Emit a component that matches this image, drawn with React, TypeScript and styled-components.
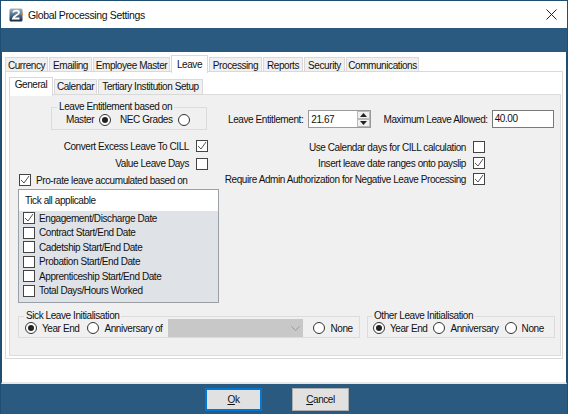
import React from "react";
import styled, { createGlobalStyle } from "styled-components";

const Global = createGlobalStyle`
  html, body { margin: 0; padding: 0; background: #fff; }
  body { font-family: "Liberation Sans", Arial, sans-serif; font-size: 10px; letter-spacing: -0.42px; color: #111; }
  * { box-sizing: border-box; }
`;

const Window = styled.div`
  width: 568px; height: 414px; display: flex; flex-direction: column;
  border: solid #1f4e70; border-width: 1px 1px 0 1px; background: #fff;
`;
const TitleBar = styled.div`
  height: 27px; display: flex; align-items: center; padding: 0 10px 0 8px; gap: 5px; background: #fff;
`;
const Title = styled.span`
  font: 10.5px "Liberation Sans", sans-serif; letter-spacing: -0.35px; color: #111; flex: 1;
`;
const Band = styled.div`height: 24px; background: #2a5a80;`;
const Body = styled.div`
  flex: 1; padding: 3px 3px 0 3px; display: flex; flex-direction: column; background: #fff;
  border-left: 1px solid #1f4e70; border-right: 1px solid #1f4e70; border-bottom: 2px solid #e8e8e8;
`;
const TabRow = styled.div`display: flex; align-items: flex-end; gap: 1px; position: relative; z-index: 1;`;
const Tab = styled.div<{ $on?: boolean; $w: number; $inner?: boolean }>`
  width: ${p => p.$w}px;
  height: ${p => p.$on ? (p.$inner ? 19 : 18) : (p.$inner ? 16 : 15)}px;
  line-height: ${p => p.$on ? (p.$inner ? 13 : 17) : (p.$inner ? 14 : 15)}px;
  text-align: center;
  background: ${p => p.$on ? "#fff" : "#f0f0f0"};
  border: 1px solid #d9d9d9; border-bottom: ${p => p.$on ? "none" : "1px solid #d9d9d9"};
  margin-bottom: ${p => p.$on ? -1 : 0}px; white-space: nowrap;
`;
const OuterPanel = styled.div`
  margin-top: -1px; height: 288px; border: 1px solid #d9d9d9; background: #fff; padding: 5px 1px 2px 3px;
`;
const InnerPanel = styled.div`
  height: 262px; background: #f0f0f0; border: 1px solid #dcdcdc; margin-top: -1px; padding: 5px 6px 0 8px;
  display: flex; flex-direction: column;
`;
const Columns = styled.div`display: flex; gap: 9px;`;
const LeftCol = styled.div`width: 201px; flex: none; display: flex; flex-direction: column;`;
const RightCol = styled.div`flex: 1; min-width: 0; display: flex; flex-direction: column;`;
const Group = styled.fieldset<{ $w: number; $h: number; $px?: number }>`
  width: ${p => p.$w}px; height: ${p => p.$h}px; margin: 0; padding: 0 ${p => p.$px ?? 6}px; border: 1px solid #dcdcdc; min-width: 0;
  position: relative; display: flex; align-items: center; flex: none;
`;
const Legend = styled.legend`
  padding: 0 2px; margin-left: -1px; line-height: 10px; height: 10px; white-space: nowrap;
`;
const EntGroupWrap = styled.div`margin: 2px 0 0 33px; height: 28px;`;
const Options = styled.div<{ $gap: number; $pad?: number }>`
  display: flex; align-items: center; gap: ${p => p.$gap}px; padding-left: ${p => p.$pad ?? 0}px; margin-top: -2px;
`;
const Opt = styled.label`display: flex; align-items: center; gap: 5px; white-space: nowrap;`;
const RadioBox = styled.span<{ $on?: boolean }>`
  width: 12px; height: 12px; border-radius: 50%; border: 1px solid #333; background: #fff;
  display: inline-flex; align-items: center; justify-content: center; flex: none;
  &::after { content: ""; width: 6px; height: 6px; border-radius: 50%; background: ${p => p.$on ? "#222" : "transparent"}; }
`;
const Box = styled.span`
  width: 12px; height: 12px; border: 1px solid #444; background: #fff; flex: none; display: inline-flex;
  align-items: center; justify-content: center;
`;
const CheckRow = styled.div<{ $h: number }>`
  display: flex; justify-content: flex-end; align-items: center; gap: 7px; height: ${p => p.$h}px; white-space: nowrap;
`;
const LeftChecks = styled.div`margin-top: 7px; padding-right: 11px;`;
const ProRate = styled.div`display: flex; align-items: center; gap: 5px; height: 16px; padding-left: 1px;`;
const ListBox = styled.div`
  width: 201px; height: 114px; margin-top: 1px; border: 1px solid #9aa0a6; background: #dfe3e8; display: flex; flex-direction: column;
`;
const ListHead = styled.div`height: 21px; line-height: 21px; background: #fff; padding-left: 6px;`;
const ListItems = styled.div`padding: 0 0 0 4px; display: flex; flex-direction: column;`;
const ListItem = styled.div`display: flex; align-items: center; gap: 4px; height: 14.5px; white-space: nowrap;`;
const EntRow = styled.div`display: flex; align-items: center; margin-top: 9px; height: 20px;`;
const Label = styled.span<{ $ml?: number }>`margin-left: ${p => p.$ml ?? 0}px; white-space: nowrap;`;
const Spinner = styled.div`
  width: 64px; height: 18px; margin-left: 5px; border: 1px solid #9a9a9a; background: #fff; display: flex; align-items: center;
  padding-left: 2px; position: relative;
`;
const SpinBtns = styled.div`
  position: absolute; right: 0; top: 0; bottom: 0; width: 13px; display: flex; flex-direction: column; background: #f0f0f0;
`;
const SpinBtn = styled.span`
  flex: 1; display: flex; align-items: center; justify-content: center; border: 1px solid #bbb;
`;
const TextInput = styled.div`
  width: 64px; height: 18px; margin-left: 4px; border: 1px solid #7a7a7a; background: #fff; padding-left: 2px; line-height: 16px;
`;
const RightChecks = styled.div`margin-top: 10px; padding-right: 69px; display: flex; flex-direction: column;`;
const BottomRow = styled.div`display: flex; gap: 7px; margin-top: 8px;`;
const Combo = styled.div`
  width: 135px; height: 18px; background: #c8c8c8; display: flex; align-items: center; justify-content: flex-end; padding-right: 3px; margin: 0 2px 0 -2px;
`;
const Footer = styled.div`
  height: 30px; background: #2a5a80; display: flex; align-items: center; padding-left: 204px; gap: 30px;
`;
const Btn = styled.div<{ $primary?: boolean }>`
  width: 57px; height: 23px; background: #e1e1e1; border: ${p => p.$primary ? "2px solid #0078d7" : "1px solid #adadad"};
  display: flex; align-items: center; justify-content: center; color: #111;
  u { text-decoration: underline; }
`;

const Check = () => (
  <svg width="10" height="10" viewBox="0 0 10 10" fill="none">
    <path d="M1 5l3 3 5-7" stroke="#555" strokeWidth="1" />
  </svg>
);
const CB = ({ on }: { on?: boolean }) => <Box>{on && <Check />}</Box>;

const Logo = () => (
  <svg width="14" height="14" viewBox="0 0 14 14">
    <defs>
      <linearGradient id="lg" x1="0" y1="0" x2="0" y2="1">
        <stop offset="0" stopColor="#9fb4c6" />
        <stop offset="0.55" stopColor="#4a6a86" />
        <stop offset="1" stopColor="#18283a" />
      </linearGradient>
    </defs>
    <rect x="0.5" y="0.5" width="13" height="13" rx="1.5" fill="url(#lg)" />
    <path d="M4 4.5c1-2.5 6-2.5 6 0 0 2.5-5 3-6 6h6.5" fill="none" stroke="#fff" strokeWidth="1.8" />
    <path d="M10.5 5.5l3.5-1v2.5z" fill="#d98a33" />
  </svg>
);

const items: [string, boolean][] = [
  ["Engagement/Discharge Date", true],
  ["Contract Start/End Date", false],
  ["Cadetship Start/End Date", false],
  ["Probation Start/End Date", false],
  ["Apprenticeship Start/End Date", false],
  ["Total Days/Hours Worked", false],
];

const Tabs1: [string, number, boolean?][] = [
  ["Currency", 43], ["Emailing", 43], ["Employee Master", 77], ["Leave", 37, true],
  ["Processing", 53], ["Reports", 40], ["Security", 41], ["Communications", 73],
];
const Tabs2: [string, number, boolean?][] = [
  ["General", 44, true], ["Calendar", 43], ["Tertiary Institution Setup", 105],
];

export default function App() {
  return (
    <Window>
      <Global />
      <TitleBar>
        <Logo />
        <Title>Global Processing Settings</Title>
        <svg width="11" height="11" viewBox="0 0 11 11"><path d="M0.5 0.5l10 10M10.5 0.5l-10 10" stroke="#222" strokeWidth="1" /></svg>
      </TitleBar>
      <Band />
      <Body>
        <TabRow>
          {Tabs1.map(([t, w, on]) => <Tab key={t} $w={w} $on={on}>{t}</Tab>)}
        </TabRow>
        <OuterPanel>
          <TabRow>
            {Tabs2.map(([t, w, on]) => <Tab key={t} $inner $w={w} $on={on}>{t}</Tab>)}
          </TabRow>
          <InnerPanel>
            <Columns>
              <LeftCol>
                <EntGroupWrap>
                  <Group $w={156} $h={28}>
                    <Legend>Leave Entitlement based on</Legend>
                    <Options $gap={9} $pad={8}>
                      <Opt>Master <RadioBox $on /></Opt>
                      <Opt>NEC Grades <RadioBox /></Opt>
                    </Options>
                  </Group>
                </EntGroupWrap>
                <LeftChecks>
                  <CheckRow $h={18}>Convert Excess Leave To CILL <CB on /></CheckRow>
                  <CheckRow $h={17}>Value Leave Days <CB /></CheckRow>
                </LeftChecks>
                <ProRate><CB on /> Pro-rate leave accumulated based on</ProRate>
                <ListBox>
                  <ListHead>Tick all applicable</ListHead>
                  <ListItems>
                    {items.map(([t, on]) => <ListItem key={t}><CB on={on} />{t}</ListItem>)}
                  </ListItems>
                </ListBox>
              </LeftCol>
              <RightCol>
                <EntRow>
                  <Label>Leave Entitlement:</Label>
                  <Spinner>21.67
                    <SpinBtns>
                      <SpinBtn><svg width="7" height="4"><path d="M3.5 0L7 4H0z" fill="#222" /></svg></SpinBtn>
                      <SpinBtn><svg width="7" height="4"><path d="M0 0h7L3.5 4z" fill="#222" /></svg></SpinBtn>
                    </SpinBtns>
                  </Spinner>
                  <Label $ml={13}>Maximum Leave Allowed:</Label>
                  <TextInput>40.00</TextInput>
                </EntRow>
                <RightChecks>
                  <CheckRow $h={16}>Use Calendar days for CILL calculation <CB /></CheckRow>
                  <CheckRow $h={16}>Insert leave date ranges onto payslip <CB on /></CheckRow>
                  <CheckRow $h={16}>Require Admin Authorization for Negative Leave Processing <CB on /></CheckRow>
                </RightChecks>
              </RightCol>
            </Columns>
            <BottomRow>
              <Group $w={342} $h={27}>
                <Legend>Sick Leave Initialisation</Legend>
                <Options $gap={8}>
                  <Opt><RadioBox $on /> Year End</Opt>
                  <Opt><RadioBox /> Anniversary of</Opt>
                  <Combo>
                    <svg width="9" height="5"><path d="M0.5 0.5l4 4 4-4" fill="none" stroke="#999" /></svg>
                  </Combo>
                  <Opt><RadioBox /> None</Opt>
                </Options>
              </Group>
              <Group $w={188} $h={27} $px={5}>
                <Legend>Other Leave Initialisation</Legend>
                <Options $gap={6}>
                  <Opt><RadioBox $on /> Year End</Opt>
                  <Opt><RadioBox /> Anniversary</Opt>
                  <Opt><RadioBox /> None</Opt>
                </Options>
              </Group>
            </BottomRow>
          </InnerPanel>
        </OuterPanel>
      </Body>
      <Footer>
        <Btn $primary><span><u>O</u>k</span></Btn>
        <Btn><span><u>C</u>ancel</span></Btn>
      </Footer>
    </Window>
  );
}
